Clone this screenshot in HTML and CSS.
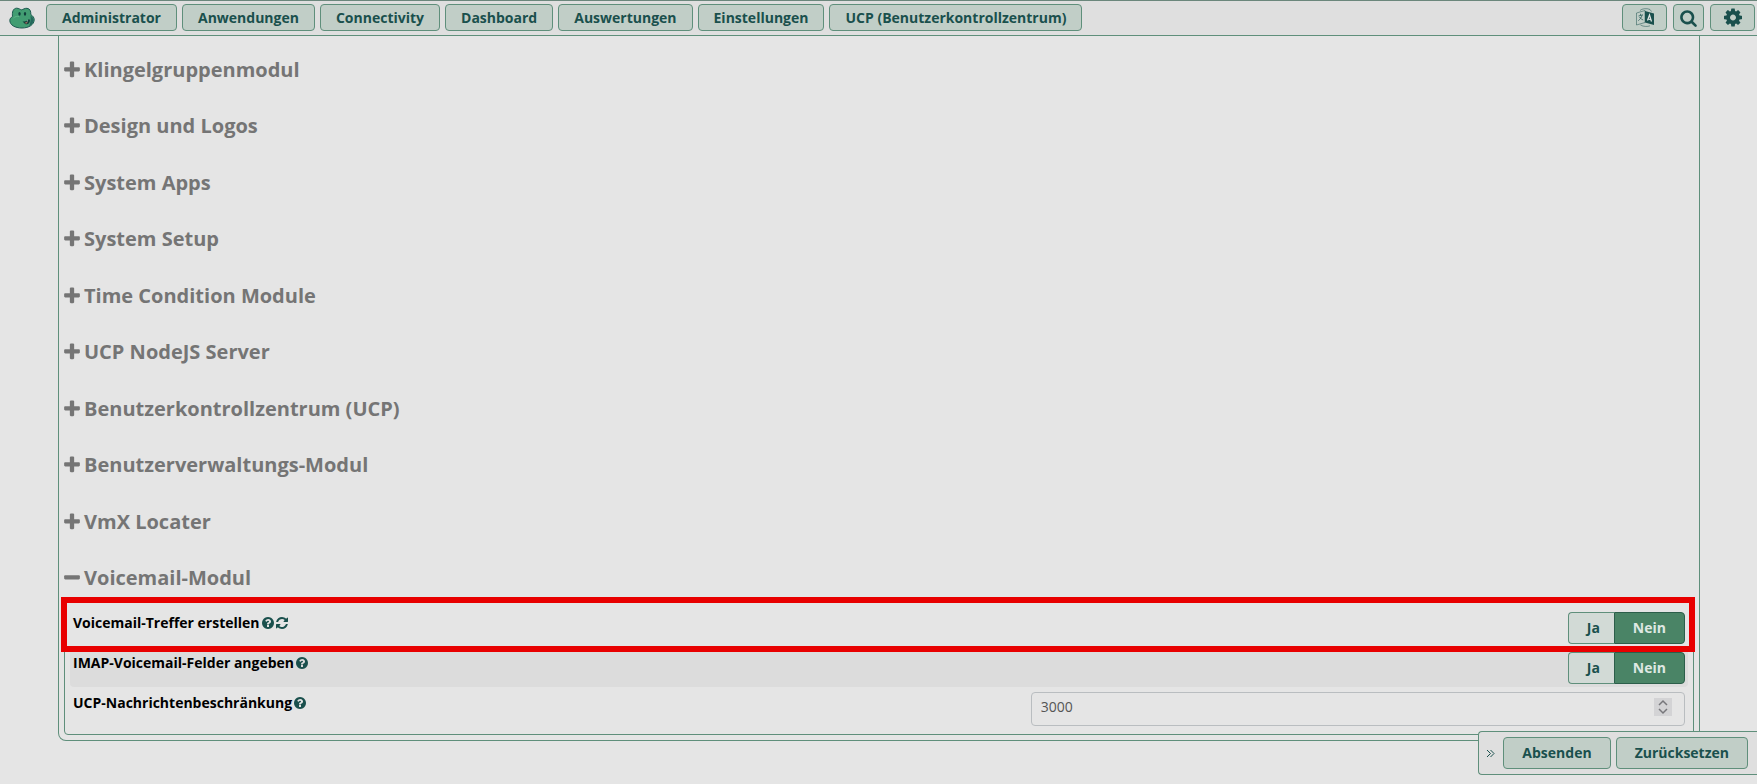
FILE: index.html
```html
<!DOCTYPE html>
<html lang="de">
<head>
    <meta charset="UTF-8">
    <meta name="viewport" content="width=device-width, initial-scale=1.0">
    <title>Erweiterte Einstellungen</title>
    <link rel="stylesheet" href="styles.css">
</head>
<body>
    <!-- Icons -->
    <svg class="sprite" aria-hidden="true">
        <symbol id="plus" viewBox="192 0 1408 1792"><path d="M1600 736v192q0 40-28 68t-68 28h-416v416q0 40-28 68t-68 28h-192q-40 0-68-28t-28-68v-416h-416q-40 0-68-28t-28-68v-192q0-40 28-68t68-28h416v-416q0-40 28-68t68-28h192q40 0 68 28t28 68v416h416q40 0 68 28t28 68z"/></symbol>
        <symbol id="minus" viewBox="192 0 1408 1792"><path d="M1600 736v192q0 40-28 68t-68 28h-1216q-40 0-68-28t-28-68v-192q0-40 28-68t68-28h1216q40 0 68 28t28 68z"/></symbol>
        <symbol id="question" viewBox="128 0 1536 1792"><path d="M1024 1376v-192q0-14-9-23t-23-9h-192q-14 0-23 9t-9 23v192q0 14 9 23t23 9h192q14 0 23-9t9-23zm256-672q0-88-55.5-163t-138.5-116-170-41q-243 0-371 213-15 24 8 42l132 100q7 6 19 6 16 0 25-12 53-68 86-92 34-24 86-24 48 0 85.5 26t37.5 59q0 38-20 61t-68 45q-63 28-115.5 86.5t-52.5 125.5v36q0 14 9 23t23 9h192q14 0 23-9t9-23q0-19 21.5-49.5t54.5-49.5q32-18 49-28.5t46-35 44.5-48 28-60.5 12.5-81zm384 192q0 209-103 385.5t-279.5 279.5-385.5 103-385.5-103-279.5-279.5-103-385.5 103-385.5 279.5-279.5 385.5-103 385.5 103 279.5 279.5 103 385.5z"/></symbol>
        <symbol id="refresh" viewBox="128 0 1536 1792"><path d="M1639 1056q0 5-1 7-64 268-268 434.5t-478 166.5q-146 0-282.5-55t-243.5-157l-129 129q-19 19-45 19t-45-19-19-45v-448q0-26 19-45t45-19h448q26 0 45 19t19 45-19 45l-137 137q71 66 161 102t187 36q134 0 250-65t186-179q11-17 53-117 8-23 30-23h192q13 0 22.5 9.5t9.5 22.5zm25-800v448q0 26-19 45t-45 19h-448q-26 0-45-19t-19-45 19-45l138-138q-148-137-349-137-134 0-250 65t-186 179q-11 17-53 117-8 23-30 23h-199q-13 0-22.5-9.5t-9.5-22.5v-7q65-268 270-434.5t480-166.5q146 0 284 55.5t245 156.5l130-129q19-19 45-19t45 19 19 45z"/></symbol>
    </svg>

    <!-- Navigation -->
    <header class="navbar">
        <a class="brand" href="#" aria-label="Start">
            <svg width="26" height="22" viewBox="0 0 26 22">
                <path d="M3.500 9.500C3 5 4 1.500 7.500 1.200c2.500 0 3.500 1.300 5 1.600 1.800-.3 3-1.700 5.500-1.500 3 .3 4 3 3.800 6.200 2 1.500 3.600 3.200 3.400 5.500-.3 4.500-5 8-12.200 8S1 18 .8 13.500c0-1.800 1.200-3 2.700-4z" fill="#429d72" stroke="#1d5a50" stroke-width="1"/>
                <path d="M21.500 8.500c2 1.500 3.200 3 3 5-.3 2.500-2 4.500-4.500 5.500 1.500-3.500 2-6.500 1.500-10.500z" fill="#25675d"/>
                <path d="M4.500 11c1.500-1.500 4-2 5.500-1.500" fill="none" stroke="#61b58a" stroke-width="1"/>
                <ellipse cx="10.500" cy="6.800" rx="1.200" ry="1.900" fill="#123f3c"/>
                <ellipse cx="16" cy="6.800" rx="1.200" ry="1.900" fill="#123f3c"/>
                <path d="M13.500 14.200c2.500.6 4.500-.2 6.200-2l1.300.6c0 2.400-1 4.200-2.800 4.500-1.800.2-3.200-1.200-4.700-3.100z" fill="#123f3c"/>
                <path d="M15.800 16c.8-.7 1.800-.9 2.800-.5-.4 1-1.900 1.300-2.800.5z" fill="#d07a68"/>
                <path d="M17.500 14l1.300-.8v1.400z" fill="#e5e5e5"/>
            </svg>
        </a>
        <nav class="menu">
            <button class="btn" type="button">Administrator</button>
            <button class="btn" type="button">Anwendungen</button>
            <button class="btn" type="button">Connectivity</button>
            <button class="btn" type="button">Dashboard</button>
            <button class="btn" type="button">Auswertungen</button>
            <button class="btn" type="button">Einstellungen</button>
            <button class="btn" type="button">UCP (Benutzerkontrollzentrum)</button>
        </nav>
        <div class="tools">
            <button class="btn" type="button" aria-label="Sprache">
                <svg width="18" height="19" viewBox="0 0 18 19">
                    <path d="M9 3l9 2.500V17l-9-2.500z"/>
                    <path d="M.5 5L9 2.500v12l-8.500 2.500zM4 2.500C6 .5 11 0 14 1.500l1.500 2M4.500 17c3 1.800 7 1.800 9.500.8" fill="none" stroke="currentColor" stroke-width="1" opacity=".5"/>
                    <path d="M2.500 8l4.500-1.200M4.500 5.800v1.500M6 7.200c-.5 2.500-2 4-3.700 5.500M3.500 9c1 1.500 2.200 2.300 3.700 3" fill="none" stroke="currentColor" stroke-width="1" opacity=".7"/>
                    <path d="M11.500 12.500l2-5.500 2 6.500M12.200 11l2.600.7" fill="none" stroke="#dfe5e2" stroke-width="1.200"/>
                </svg>
            </button>
            <button class="btn btn-search" type="button" aria-label="Suche">
                <svg width="17" height="18" viewBox="64 0 1664 1792"><path d="M1216 832q0-185-131.500-316.500t-316.500-131.500-316.500 131.500-131.500 316.500 131.500 316.500 316.500 131.500 316.500-131.500 131.500-316.500zm512 832q0 52-38 90t-90 38q-54 0-90-38l-343-342q-179 124-399 124-143 0-273.500-55.500t-225-150-150-225-55.500-273.500 55.500-273.500 150-225 225-150 273.500-55.500 273.500 55.500 225 150 150 225 55.500 273.500q0 220-124 399l343 343q37 37 37 90z"/></svg>
            </button>
            <button class="btn" type="button" aria-label="Optionen">
                <svg width="18" height="21" viewBox="128 0 1536 1792"><path d="M1152 896q0-106-75-181t-181-75-181 75-75 181 75 181 181 75 181-75 75-181zm512-109v222q0 12-8 23t-20 13l-185 28q-19 54-39 91 35 50 107 138 10 12 10 25t-9 23q-27 37-99 108t-94 71q-12 0-26-9l-138-108q-44 23-91 38-16 136-29 186-7 28-36 28h-222q-14 0-24.500-8.500t-11.500-21.500l-28-184q-49-16-90-37l-141 107q-10 9-25 9-14 0-25-11-126-114-165-168-7-10-7-23 0-12 8-23 15-21 51-66.500t54-70.500q-27-50-41-99l-183-27q-13-2-21-12.500t-8-23.500v-222q0-12 8-23t19-13l186-28q14-46 39-92-40-57-107-138-10-12-10-24 0-10 9-23 26-36 98.500-107.500t94.500-71.500q13 0 26 10l138 107q44-23 91-38 16-136 29-186 7-28 36-28h222q14 0 24.500 8.500t11.500 21.500l28 184q49 16 90 37l142-107q9-9 24-9 13 0 25 10 129 119 165 170 7 8 7 22 0 12-8 23-15 21-51 66.500t-54 70.500q26 50 41 98l183 28q13 2 21 12.500t8 23.500z"/></svg>
            </button>
        </div>
    </header>

    <!-- Einstellungen -->
    <main class="settings">
        <h3><button class="toggle" type="button"><svg><use href="#plus"/></svg>Klingelgruppenmodul</button></h3>
        <h3><button class="toggle" type="button"><svg><use href="#plus"/></svg>Design und Logos</button></h3>
        <h3><button class="toggle" type="button"><svg><use href="#plus"/></svg>System Apps</button></h3>
        <h3><button class="toggle" type="button"><svg><use href="#plus"/></svg>System Setup</button></h3>
        <h3><button class="toggle" type="button"><svg><use href="#plus"/></svg>Time Condition Module</button></h3>
        <h3><button class="toggle" type="button"><svg><use href="#plus"/></svg>UCP NodeJS Server</button></h3>
        <h3><button class="toggle" type="button"><svg><use href="#plus"/></svg>Benutzerkontrollzentrum (UCP)</button></h3>
        <h3><button class="toggle" type="button"><svg><use href="#plus"/></svg>Benutzerverwaltungs-Modul</button></h3>
        <h3><button class="toggle" type="button"><svg><use href="#plus"/></svg>VmX Locater</button></h3>
        <h3><button class="toggle" type="button"><svg><use href="#minus"/></svg>Voicemail-Modul</button></h3>

        <div class="section">
            <div class="row marked" role="radiogroup" aria-labelledby="treffer">
                <div class="name"><span id="treffer">Voicemail-Treffer erstellen</span><svg><use href="#question"/></svg><svg><use href="#refresh"/></svg></div>
                <div class="control">
                    <div class="radioset">
                        <input type="radio" name="treffer" id="treffer-ja"><label for="treffer-ja">Ja</label>
                        <input type="radio" name="treffer" id="treffer-nein" checked><label for="treffer-nein">Nein</label>
                    </div>
                </div>
            </div>
            <div class="row" role="radiogroup" aria-labelledby="imap">
                <div class="name"><span id="imap">IMAP-Voicemail-Felder angeben</span><svg><use href="#question"/></svg></div>
                <div class="control">
                    <div class="radioset">
                        <input type="radio" name="imap" id="imap-ja"><label for="imap-ja">Ja</label>
                        <input type="radio" name="imap" id="imap-nein" checked><label for="imap-nein">Nein</label>
                    </div>
                </div>
            </div>
            <div class="row">
                <div class="name"><label for="limit">UCP-Nachrichtenbeschränkung</label><svg><use href="#question"/></svg></div>
                <div class="control">
                    <div class="number">
                        <input type="number" id="limit" value="3000">
                        <svg class="spinner" viewBox="0 0 18 18"><path d="M5 7l4-4 4 4M5 11l4 4 4-4"/></svg>
                    </div>
                </div>
            </div>
        </div>
    </main>

    <!-- Aktionen -->
    <div class="actions">
        <button class="collapse" type="button" aria-label="Einklappen"><svg width="9" height="9" viewBox="0 0 9 9"><path d="M1 1l3.500 3.500L1 8M4.500 1L8 4.500 4.500 8"/></svg></button>
        <button class="btn" type="submit">Absenden</button>
        <button class="btn" type="reset">Zurücksetzen</button>
    </div>
</body>
</html>
```
FILE: styles.css
```css
* {
    box-sizing: border-box;
}
body {
    margin: 0;
    background-color: #e5e5e5;
    color: #000;
    font-family: "Open Sans", "Noto Sans", sans-serif;
    font-size: 14px;
    line-height: 20px;
}
button, input {
    font: inherit;
}
svg {
    fill: currentColor;
    flex: none;
}
.sprite {
    position: absolute;
    width: 0;
    height: 0;
}
.btn {
    display: flex;
    align-items: center;
    justify-content: center;
    height: 27px;
    padding: 0 15px;
    background-color: #c1cec7;
    border: 1px solid #5f8f7b;
    border-radius: 4px;
    color: #1a504d;
    font-weight: bold;
    cursor: pointer;
}

/* Navigation */
.navbar {
    display: flex;
    align-items: center;
    height: 36px;
    padding: 0 2px 1px 9px;
    background-color: #dfdfdf;
    border-top: 1px solid #6b877c;
    border-bottom: 1px solid #5f8f7b;
}
.brand {
    display: flex;
    margin-right: 11px;
}
.menu {
    display: flex;
    gap: 5px;
}
.tools {
    display: flex;
    gap: 6px;
    margin-left: auto;
}
.tools .btn {
    width: 45px;
    padding: 0;
}
.tools .btn-search {
    width: 31px;
}

/* Einstellungen */
.settings {
    margin: 0 57px 0 58px;
    padding: 22px 5px 5px;
    border: 1px solid #5f8f7b;
    border-top: 0;
    border-radius: 0 0 8px 8px;
}
h3 {
    margin: 0 0 32px;
    font-size: 20px;
    line-height: 24px;
}
h3:nth-of-type(even) {
    margin-bottom: 33px;
}
h3:last-of-type {
    margin-bottom: 10px;
}
.toggle {
    display: flex;
    align-items: center;
    gap: 4px;
    padding: 0;
    background: none;
    border: 0;
    color: #757575;
    cursor: pointer;
}
.toggle svg {
    width: 16px;
    height: 20px;
}
.section {
    padding: 6px 5px 5px;
    border: 1px solid #5f8f7b;
    border-radius: 4px;
}
.row {
    position: relative;
    display: grid;
    grid-template-columns: 7fr 5fr;
    padding: 5px 0 3px;
    border-radius: 4px;
}
.row:nth-child(even) {
    background-color: #dcdcdc;
}
.marked::after {
    content: "";
    position: absolute;
    z-index: 1;
    inset: -10px -7px -5px -9px;
    border: 6px solid #e80000;
    pointer-events: none;
}
.name {
    display: flex;
    align-items: center;
    gap: 2px;
    height: 22px;
    padding-left: 3px;
    font-weight: bold;
}
.name svg {
    width: 12px;
    height: 14px;
    color: #1a504d;
}
.control {
    padding: 0 3px 0 17px;
}
.radioset {
    display: flex;
    justify-content: flex-end;
}
.radioset input {
    position: absolute;
    opacity: 0;
}
.radioset label {
    height: 32px;
    padding: 5px 14px 5px 18px;
    background-color: #d2dad6;
    border: 1px solid #5f8f7b;
    border-right: 0;
    border-radius: 4px 0 0 4px;
    color: #1a504d;
    font-weight: bold;
    cursor: pointer;
}
.radioset label:last-child {
    padding-right: 18px;
    border-right: 1px solid #2c5e4a;
    border-radius: 0 4px 4px 0;
}
.radioset input:checked + label {
    background-color: #4a8466;
    border-color: #2c5e4a;
    color: #dfe8e3;
}
.number {
    display: flex;
    height: 34px;
    padding: 5px 12px 5px 9px;
    border: 1px solid #b9bdc0;
    border-radius: 4px;
}
.number input {
    flex: 1;
    min-width: 0;
    height: 18px;
    padding: 0;
    background: none;
    border: 0;
    color: #555;
    appearance: textfield;
}
.spinner {
    width: 18px;
    height: 18px;
    background-color: #d3d3d5;
}
.spinner path, .collapse path {
    fill: none;
    stroke: #77777b;
    stroke-width: 1.5;
}

/* Aktionen */
.actions {
    position: fixed;
    right: 0;
    bottom: 9px;
    display: flex;
    gap: 5px;
    padding: 5px 9px 5px 3px;
    background-color: #dfdfdf;
    border: 1px solid #5f8f7b;
    border-right: 0;
    border-radius: 4px 0 0 4px;
}
.actions .btn {
    height: 32px;
    padding: 0 18px;
}
.collapse {
    display: flex;
    align-items: center;
    padding: 0 3px 0 4px;
    background: none;
    border: 0;
}
.collapse path {
    stroke: #1a504d;
    stroke-width: 1;
}
```
